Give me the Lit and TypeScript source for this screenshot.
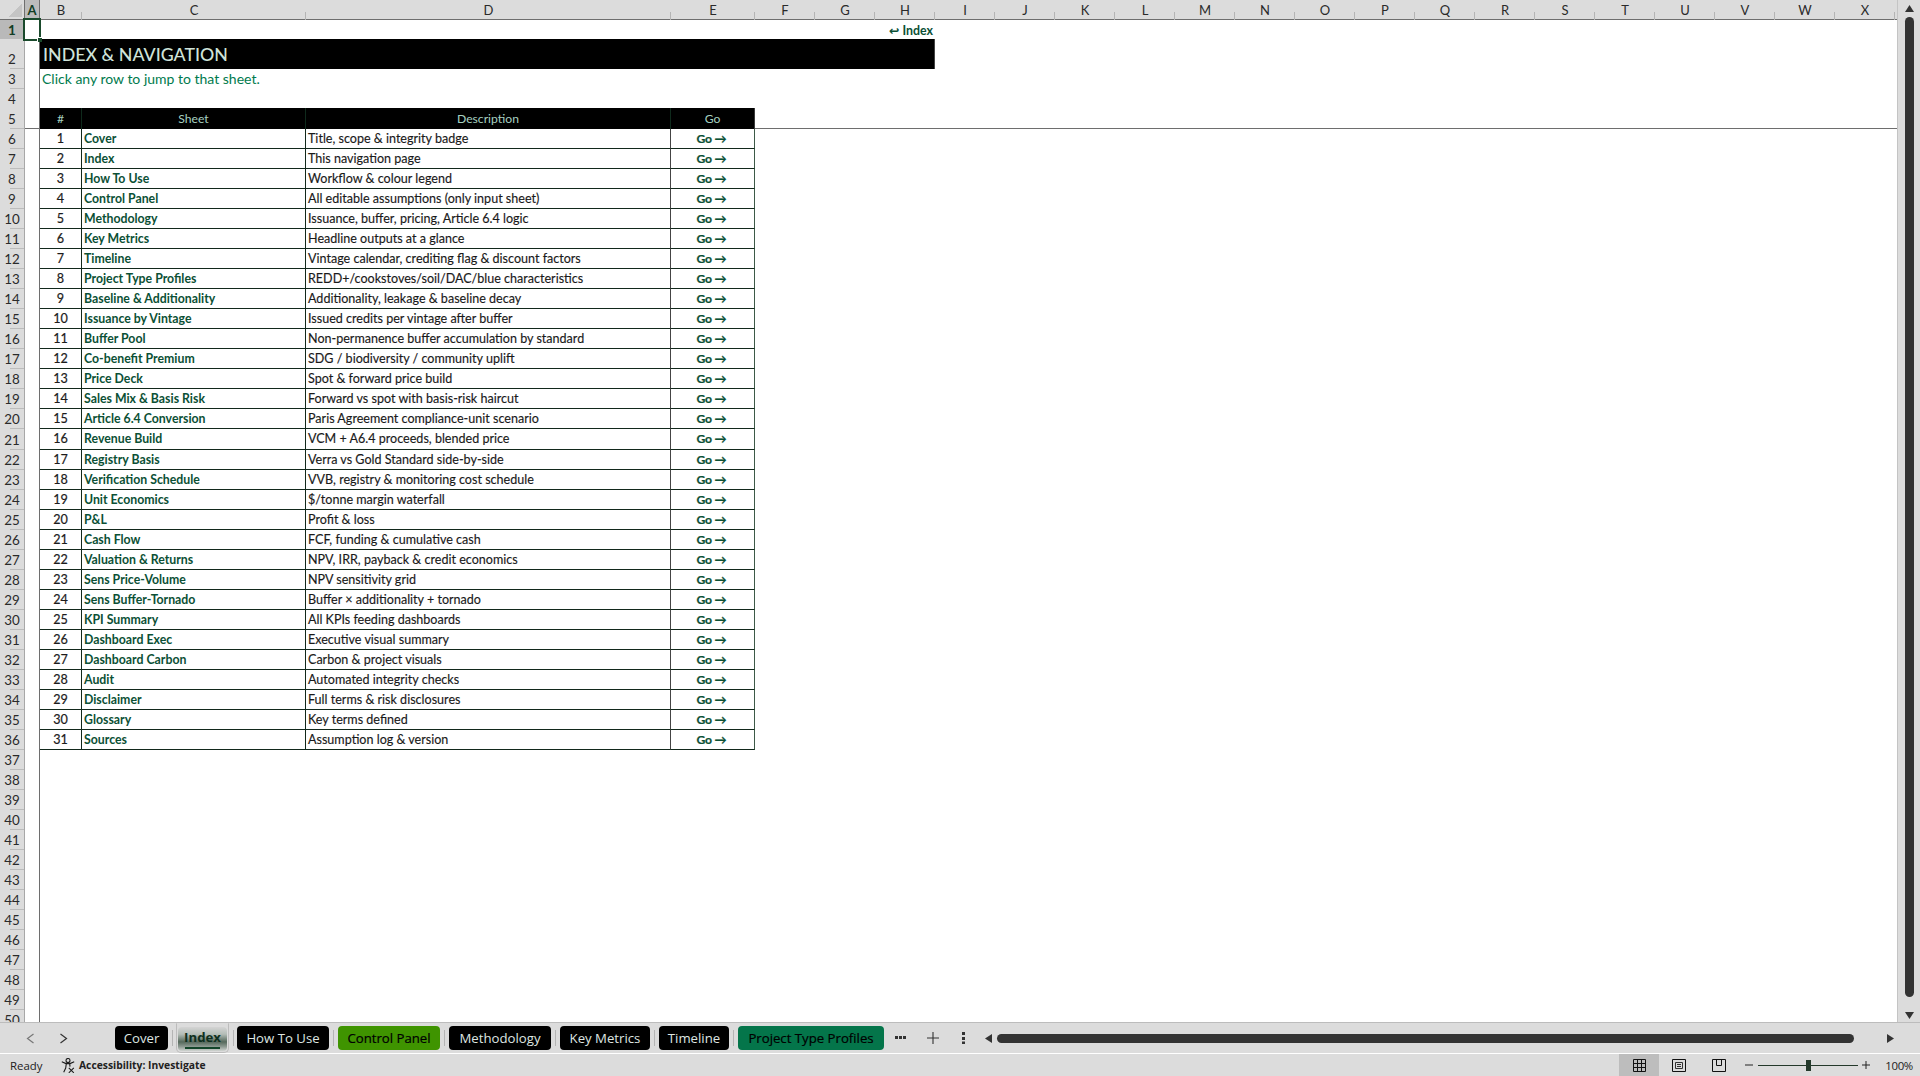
import { LitElement, html, css, svg } from "lit";
import { customElement } from "lit/decorators.js";

const COLS = "ABCDEFGHIJKLMNOPQRSTUVWX".split("");

const SHEETS: [string, string][] = [
  ["Cover", "Title, scope & integrity badge"],
  ["Index", "This navigation page"],
  ["How To Use", "Workflow & colour legend"],
  ["Control Panel", "All editable assumptions (only input sheet)"],
  ["Methodology", "Issuance, buffer, pricing, Article 6.4 logic"],
  ["Key Metrics", "Headline outputs at a glance"],
  ["Timeline", "Vintage calendar, crediting flag & discount factors"],
  ["Project Type Profiles", "REDD+/cookstoves/soil/DAC/blue characteristics"],
  ["Baseline & Additionality", "Additionality, leakage & baseline decay"],
  ["Issuance by Vintage", "Issued credits per vintage after buffer"],
  ["Buffer Pool", "Non-permanence buffer accumulation by standard"],
  ["Co-benefit Premium", "SDG / biodiversity / community uplift"],
  ["Price Deck", "Spot & forward price build"],
  ["Sales Mix & Basis Risk", "Forward vs spot with basis-risk haircut"],
  ["Article 6.4 Conversion", "Paris Agreement compliance-unit scenario"],
  ["Revenue Build", "VCM + A6.4 proceeds, blended price"],
  ["Registry Basis", "Verra vs Gold Standard side-by-side"],
  ["Verification Schedule", "VVB, registry & monitoring cost schedule"],
  ["Unit Economics", "$/tonne margin waterfall"],
  ["P&L", "Profit & loss"],
  ["Cash Flow", "FCF, funding & cumulative cash"],
  ["Valuation & Returns", "NPV, IRR, payback & credit economics"],
  ["Sens Price-Volume", "NPV sensitivity grid"],
  ["Sens Buffer-Tornado", "Buffer × additionality + tornado"],
  ["KPI Summary", "All KPIs feeding dashboards"],
  ["Dashboard Exec", "Executive visual summary"],
  ["Dashboard Carbon", "Carbon & project visuals"],
  ["Audit", "Automated integrity checks"],
  ["Disclaimer", "Full terms & risk disclosures"],
  ["Glossary", "Key terms defined"],
  ["Sources", "Assumption log & version"],
];

// label, width, look
const TABS: [string, number, string][] = [
  ["Cover", 53, "dark"],
  ["Index", 49, "active"],
  ["How To Use", 92, "dark"],
  ["Control Panel", 102, "lime"],
  ["Methodology", 102, "dark"],
  ["Key Metrics", 90, "dark"],
  ["Timeline", 70, "dark"],
  ["Project Type Profiles", 146, "green"],
];

const icon = (w: number, h: number, body: unknown, cls = "") =>
  html`<svg class=${cls} width=${w} height=${h} viewBox="0 0 ${w} ${h}">${body}</svg>`;

@customElement("app-root")
export class AppRoot extends LitElement {
  static styles = css`
    :host {
      display: flex;
      flex-direction: column;
      width: 1920px;
      height: 1076px;
      overflow: hidden;
      background: #dcdcdc;
      font-family: Lato, "DejaVu Sans", sans-serif;
      color: #1c1c1c;
    }
    svg {
      display: block;
      flex: none;
    }
    .top {
      display: flex;
      height: 1022px;
      flex: none;
    }
    .sheet {
      position: relative;
      width: 1898px;
      height: 1022px;
      overflow: hidden;
      background: #fff;
      border-right: 1px solid #c4c4c4;
      box-sizing: content-box;
      margin-right: -1px;
    }
    .row {
      display: grid;
      grid-template-columns: 25px 15px 42px 224px 365px 84px repeat(19, 60px) 3px;
      height: 20px;
      box-sizing: border-box;
      font-size: 12.2px;
      line-height: 19px;
    }
    .row.data {
      height: 20.035px;
    }
    .row.head {
      height: 20px;
      background: #dcdcdc;
      border-bottom: 1px solid #6e6e6e;
    }
    .row.tall {
      height: 30px;
    }
    .row.short {
      height: 19px;
    }
    .row.freeze {
      height: 21px;
      border-bottom: 1px solid #6e6e6e;
    }
    .col {
      position: relative;
      text-align: center;
      font-size: 13px;
      line-height: 20px;
      color: #2a2a2a;
    }
    .col::after {
      content: "";
      position: absolute;
      right: 0;
      bottom: 0;
      width: 1px;
      height: 8px;
      background: #b4b4b4;
    }
    .col.sel {
      background: #bcbcbc;
      color: #123d24;
      font-weight: 700;
      border-left: 1px solid #6e6e6e;
      border-right: 1px solid #6e6e6e;
      margin-left: -1px;
    }
    .col.sel::after,
    .col.corner::after {
      display: none;
    }
    .col.corner {
      background: linear-gradient(135deg, #dcdcdc 50%, #c4c4c4 50%);
      background-size: 14px 14px;
      background-repeat: no-repeat;
      background-position: 8px 3px;
    }
    .rh {
      position: relative;
      display: flex;
      align-items: flex-end;
      justify-content: center;
      background: #dcdcdc;
      border-right: 1px solid #a8a8a8;
      font-size: 13.4px;
      line-height: 20px;
      color: #2a2a2a;
    }
    .rh::after {
      content: "";
      position: absolute;
      left: 10px;
      right: 0;
      bottom: 0;
      height: 1px;
      background: #bcbcbc;
    }
    .rh.sel {
      background: #b9b9b9;
      color: #123d24;
      font-weight: 700;
    }
    .a {
      border-right: 1px solid #6e6e6e;
    }
    .link {
      grid-column: 9;
      display: flex;
      justify-content: flex-end;
      align-items: center;
      padding-right: 2px;
      white-space: nowrap;
      font-weight: 700;
      font-size: 12.4px;
      color: #0b5035;
    }
    .band {
      grid-column: 3 / 10;
      background: #000;
      border-right: 1px solid #444;
      color: #cfe3da;
      font-size: 17.8px;
      line-height: 30px;
      padding-left: 3px;
      font-weight: 500;
    }
    .hint {
      grid-column: 3 / 8;
      font-size: 14px;
      line-height: 20px;
      padding-left: 2px;
      color: #007a4d;
    }
    .th {
      background: #000;
      color: #a6d0c0;
      text-align: center;
      font-size: 12.2px;
      line-height: 21px;
      border-right: 1px solid #0f2a1c;
    }
    .th.end {
      border-right: 1px solid #3a3a3a;
    }
    .td {
      border-bottom: 1px solid #12281b;
      border-right: 1px solid #12281b;
      white-space: nowrap;
      overflow: hidden;
    }
    .td.n {
      text-align: center;
      color: #1c1c1c;
      font-size: 12.6px;
      -webkit-text-stroke: 0.2px #1c1c1c;
    }
    .td.s {
      padding-left: 2px;
      color: #0b5035;
      font-weight: 700;
      font-size: 12.3px;
    }
    .td.d {
      padding-left: 2px;
      color: #1a1a1a;
      font-size: 12.55px;
      -webkit-text-stroke: 0.15px #1a1a1a;
    }
    .td.g {
      text-align: center;
      color: #0b5035;
      font-weight: 700;
      font-size: 12.2px;
      letter-spacing: -0.2px;
      padding-right: 2px;
      -webkit-text-stroke: 0.2px #0b5035;
      border-left: 1px solid #444;
      border-right: 1px solid #3d5a48;
      margin-left: -1px;
    }
    .cursor {
      position: absolute;
      left: 23px;
      top: 18px;
      width: 18px;
      height: 23px;
      box-sizing: border-box;
      border: 2px solid #1a4a2c;
    }
    .cursor::after {
      content: "";
      position: absolute;
      right: -3px;
      bottom: -3px;
      width: 4px;
      height: 4px;
      background: #1a4a2c;
      border: 1px solid #fff;
      border-right: 0;
      border-bottom: 0;
    }
    .vbar {
      width: 22px;
      flex: none;
      display: flex;
      flex-direction: column;
      align-items: center;
      padding-top: 5px;
      box-sizing: border-box;
      margin-left: 1px;
    }
    .vthumb {
      width: 9px;
      height: 980px;
      margin: 5px 0 15px;
      border-radius: 5px;
      background: #333;
    }
    .tabs {
      height: 31px;
      flex: none;
      display: flex;
      align-items: center;
      box-sizing: border-box;
      border-top: 1px solid #bcbcbc;
      padding-left: 26px;
      font-family: "Open Sans", "Noto Sans", sans-serif;
    }
    .nav {
      width: 42px;
      display: flex;
      flex: none;
    }
    .tablist {
      display: flex;
      align-items: center;
      margin-left: 47px;
    }
    .tab {
      height: 24px;
      display: flex;
      align-items: center;
      justify-content: center;
      border-radius: 4px;
      font-size: 13.2px;
      white-space: nowrap;
      box-sizing: border-box;
    }
    .tab.dark {
      background: #000;
      color: #dfe6e2;
    }
    .tab.lime {
      background: #3f9400;
      color: #000;
      -webkit-text-stroke: 0.2px #000;
    }
    .tab.green {
      background: #04754a;
      color: #000;
      -webkit-text-stroke: 0.2px #000;
    }
    .activewrap {
      align-self: flex-start;
      height: 30px;
      margin-top: -1px;
      padding: 3px 1px 0;
      border: 1px solid #bcbcbc;
      border-top: 1px solid #dcdcdc;
      border-radius: 0 0 5px 5px;
      box-sizing: border-box;
      background: #dcdcdc;
    }
    .tab.active {
      height: 24px;
      margin: 0;
      flex-direction: column;
      background: linear-gradient(#d4d4d4 0%, #b4bdb7 30%, #55695c 62%, #8e9a92 82%, #d0d4d1 100%);
      color: #0f2f1e;
      font-weight: 700;
      gap: 0;
    }
    .tab.active i {
      display: block;
      width: 35px;
      height: 2px;
      margin-top: 1px;
      background: #12452a;
    }
    .sep {
      width: 1px;
      height: 16px;
      margin: 0 4px;
      background: #b4b4b4;
      flex: none;
    }
    .sep.near {
      margin-right: 3px;
    }
    .tabtools {
      display: flex;
      align-items: center;
      margin-left: 11px;
    }
    .gap-plus {
      width: 20px;
    }
    .gap-more {
      width: 23px;
    }
    .hbar {
      display: flex;
      align-items: center;
      margin-left: 20px;
    }
    .hthumb {
      width: 857px;
      height: 9px;
      margin: 0 33px 0 5px;
      border-radius: 5px;
      background: #333;
    }
    .status {
      height: 23px;
      flex: none;
      display: flex;
      align-items: center;
      box-sizing: border-box;
      border-top: 1px solid #fff;
      font-family: "Open Sans", "Noto Sans", sans-serif;
      font-size: 11.4px;
      color: #222;
    }
    .ready {
      width: 61px;
      padding-left: 10px;
      box-sizing: border-box;
    }
    .acc {
      display: flex;
      align-items: center;
      gap: 3px;
      font-weight: 700;
      font-size: 10.3px;
    }
    .right {
      margin-left: auto;
      display: flex;
      align-items: center;
      height: 100%;
      padding-right: 7px;
    }
    .view {
      width: 40px;
      height: 100%;
      display: flex;
      align-items: center;
      justify-content: center;
    }
    .view.on {
      background: #bdbdbd;
    }
    .slider {
      display: flex;
      align-items: center;
      margin-left: 6px;
    }
    .track {
      position: relative;
      width: 100px;
      height: 1px;
      margin: 0 4px 0 5px;
      background: #24392b;
    }
    .track::after {
      content: "";
      position: absolute;
      left: 48px;
      top: -5px;
      width: 5px;
      height: 11px;
      background: #24392b;
    }
    .pct {
      margin-left: 15px;
      font-size: 11.4px;
      letter-spacing: -0.3px;
    }
  `;

  rowLabel(n: number) {
    return html`<div class="rh ${n === 1 ? "sel" : ""}">${n}</div><div class="a"></div>`;
  }

  renderSheet() {
    const rows = [];
    rows.push(html`<div class="row head">
      <div class="col corner"></div>
      ${COLS.map((c) => html`<div class="col ${c === "A" ? "sel" : ""}">${c}</div>`)}
      <div></div>
    </div>`);
    rows.push(html`<div class="row short">${this.rowLabel(1)}<div class="link">↩ Index</div></div>`);
    rows.push(html`<div class="row tall">${this.rowLabel(2)}<div class="band">INDEX &amp; NAVIGATION</div></div>`);
    rows.push(html`<div class="row">${this.rowLabel(3)}<div class="hint">Click any row to jump to that sheet.</div></div>`);
    rows.push(html`<div class="row short">${this.rowLabel(4)}</div>`);
    rows.push(html`<div class="row freeze">
      ${this.rowLabel(5)}
      <div class="th">#</div>
      <div class="th">Sheet</div>
      <div class="th">Description</div>
      <div class="th end">Go</div>
    </div>`);
    SHEETS.forEach(([name, desc], i) => {
      rows.push(html`<div class="row data">
        ${this.rowLabel(i + 6)}
        <div class="td n">${i + 1}</div>
        <div class="td s">${name}</div>
        <div class="td d">${desc}</div>
        <div class="td g">Go →</div>
      </div>`);
    });
    for (let n = 37; n <= 50; n++) {
      rows.push(html`<div class="row">${this.rowLabel(n)}</div>`);
    }
    return rows;
  }

  renderTabs() {
    const out: unknown[] = [];
    TABS.forEach(([label, w, look], i) => {
      if (i > 0) {
        out.push(html`<div class="sep ${look === "active" || TABS[i - 1][2] === "active" ? "near" : ""}"></div>`);
      }
      if (look === "active") {
        out.push(html`<div class="activewrap">
          <div class="tab active" style="width:${w}px">${label}<i></i></div>
        </div>`);
      } else {
        out.push(html`<div class="tab ${look}" style="width:${w}px">${label}</div>`);
      }
    });
    return out;
  }

  render() {
    return html`
      <div class="top">
        <div class="sheet">
          ${this.renderSheet()}
          <div class="cursor"></div>
        </div>
        <div class="vbar">
          ${icon(9, 7, svg`<path d="M4.5 0 9 7H0z" fill="#333"/>`)}
          <div class="vthumb"></div>
          ${icon(9, 7, svg`<path d="M0 0h9L4.5 7z" fill="#333"/>`)}
        </div>
      </div>
      <div class="tabs">
        <div class="nav">
          ${icon(42, 11, svg`<path d="M7.500 1 1.500 5.500l6 4.500" fill="none" stroke="#777" stroke-width="1.2"/>
            <path d="M34.500 1l6 4.500-6 4.500" fill="none" stroke="#333" stroke-width="1.2"/>`)}
        </div>
        <div class="tablist">${this.renderTabs()}</div>
        <div class="tabtools">
          ${icon(12, 4, svg`<path d="M0 0h3v3H0zM4 0h3v3H4zM8 0h3v3H8z" fill="#333"/>`)}
          <div class="gap-plus"></div>
          ${icon(12, 12, svg`<path d="M6 0v12M0 6h12" stroke="#333" stroke-width="1.1"/>`)}
          <div class="gap-more"></div>
          ${icon(3, 12, svg`<path d="M0 0h3v3H0zM0 5h3v3H0zM0 9.500h3v2.500H0z" fill="#333"/>`)}
        </div>
        <div class="hbar">
          ${icon(7, 9, svg`<path d="M7 0v9L0 4.500z" fill="#333"/>`)}
          <div class="hthumb"></div>
          ${icon(7, 9, svg`<path d="M0 0v9l7-4.500z" fill="#333"/>`)}
        </div>
      </div>
      <div class="status">
        <div class="ready">Ready</div>
        <div class="acc">
          ${icon(15, 15, svg`<g fill="none" stroke="#1a1a1a" stroke-width="1.1">
            <circle cx="7" cy="2.500" r="2"/>
            <path d="M.8 3.800 5 5.600h4l4.200-1.800M5.300 5.600l-.6 4.400-2 4.200M8.700 5.600l.3 3"/>
            <path d="M7.800 9.800l5 5M12.800 9.800l-5 5"/>
          </g>`)}
          <span>Accessibility: Investigate</span>
        </div>
        <div class="right">
          <div class="view on">
            ${icon(13, 13, svg`<path d="M.5.5h12v12H.5zM4.500.5v12M8.500.5v12M.5 4.500h12M.5 8.500h12" fill="none" stroke="#111"/>`)}
          </div>
          <div class="view">
            ${icon(14, 13, svg`<path d="M.5.5h13v12H.5z" fill="none" stroke="#111"/><path d="M3.500 3.500h7v6h-7zM5 5.500h4M5 7.500h4" fill="none" stroke="#333"/>`)}
          </div>
          <div class="view">
            ${icon(14, 13, svg`<path d="M.5.500h13v12H.5zM4.500.5v6h5v-6" fill="none" stroke="#111"/>`)}
          </div>
          <div class="slider">
            ${icon(8, 2, svg`<path d="M0 1h8" stroke="#222"/>`)}
            <div class="track"></div>
            ${icon(8, 8, svg`<path d="M0 4h8M4 0v8" stroke="#222"/>`)}
          </div>
          <div class="pct">100%</div>
        </div>
      </div>
    `;
  }
}
